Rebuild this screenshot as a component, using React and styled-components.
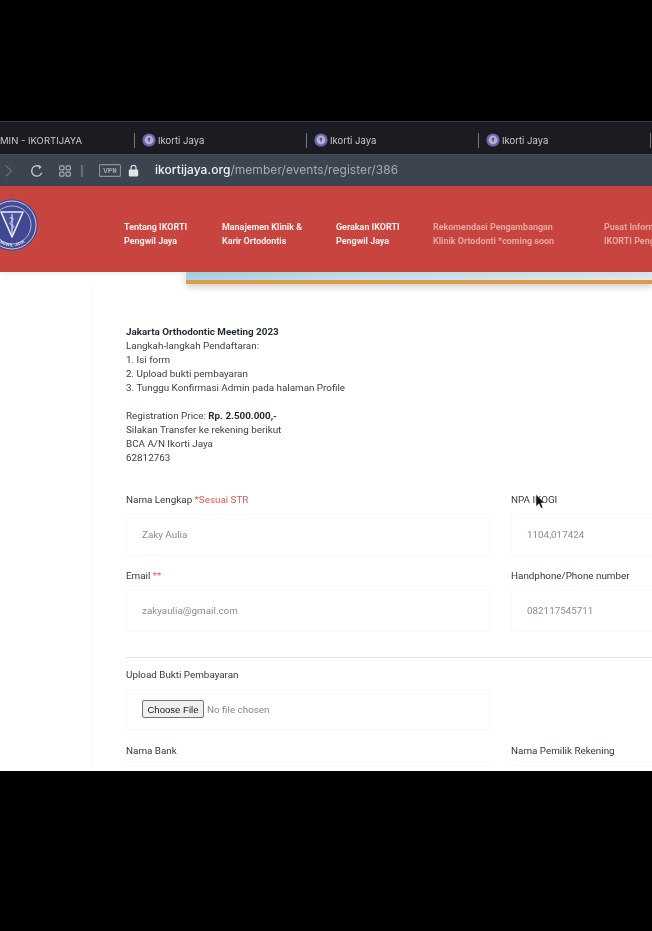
import React from "react";
import styled, { createGlobalStyle } from "styled-components";

const Global = createGlobalStyle`
  html, body { margin: 0; padding: 0; background: #000; }
  * { box-sizing: border-box; }
`;

const Page = styled.div`
  width: 652px;
  height: 931px;
  background: #000;
  overflow: hidden;
  display: flex;
  flex-direction: column;
  padding-top: 121px;
  font-family: Roboto, "Liberation Sans", sans-serif;
`;

const Screen = styled.div`
  position: relative;
  width: 652px;
  height: 650px;
  overflow: hidden;
  background: #fff;
  display: flex;
  flex-direction: column;
  filter: blur(0.5px);
`;

const TabBar = styled.div`
  height: 33px;
  flex: none;
  display: flex;
  align-items: center;
  padding-top: 4px;
  background: #1b1c21;
  border-top: 1px solid #35373d;
`;

const Tab = styled.div`
  flex: none;
  width: ${(p) => p.$width}px;
  height: 15px;
  display: flex;
  align-items: center;
  gap: 2px;
  padding-left: ${(p) => p.$inset}px;
  border-right: 1px solid #75777c;
  color: #c8c9cc;
  font-family: Inter, sans-serif;
  font-size: 9.5px;
  white-space: nowrap;
`;

const Toolbar = styled.div`
  height: 32px;
  flex: none;
  display: flex;
  align-items: center;
  background: #3c4450;
  border-top: 1px solid #474e5a;
  color: #9aa0a8;
`;

const ToolIcon = styled.svg`
  flex: none;
  display: block;
  margin-left: ${(p) => p.$left}px;
`;

const Url = styled.div`
  margin-left: 16px;
  margin-top: -2px;
  font-family: Inter, sans-serif;
  font-size: 12px;
  letter-spacing: 0.05px;
  color: #a6abb2;
  white-space: nowrap;
  b { font-weight: 500; color: #f0f1f2; }
`;

const Header = styled.header`
  position: relative;
  z-index: 2;
  height: 86px;
  flex: none;
  display: flex;
  align-items: center;
  background: #c8453f;
  box-shadow: 0 3px 6px rgba(0, 0, 0, 0.06);
`;

const Logo = styled.div`
  flex: none;
  display: block;
  width: 52px;
  height: 52px;
  margin: 0 86px 8px -14px;
`;

const Nav = styled.nav`
  display: grid;
  grid-template-columns: 98px 114px 97px 171px 120px;
  flex: none;
  margin-top: 9px;
`;

const NavItem = styled.div`
  font-size: 8.95px;
  font-weight: 700;
  line-height: 14px;
  white-space: nowrap;
  color: ${(p) => (p.$muted ? "#e6a7a2" : "#fbeeed")};
`;

const Ribbon = styled.div`
  flex: none;
  height: 12px;
  margin-left: 186px;
  background: linear-gradient(90deg, #a9d6e6 0%, #c6e2ec 40%, #dcebf1 100%);
  border-bottom: 4px solid #e09a48;
  box-shadow: 0 3px 7px rgba(0, 0, 0, 0.2);
`;

const Main = styled.main`
  flex: 1;
  margin-left: 91px;
  padding: 41px 0 0 34px;
  border-left: 1px solid #f9f9fa;
  width: 800px;
  color: #3b4148;
  font-size: 9.85px;
`;

const Intro = styled.div`
  line-height: 14px;
  margin-bottom: 28px;
  strong { font-weight: 700; color: #1f2a35; }
`;

const Line = styled.div`
  min-height: 14px;
  white-space: nowrap;
`;

const Grid = styled.div`
  display: grid;
  grid-template-columns: 364px 364px;
  column-gap: 21px;
`;

const Field = styled.div`
  display: flex;
  flex-direction: column;
  margin-bottom: ${(p) => p.$gap ?? 14}px;
`;

const Label = styled.label`
  height: 14px;
  margin-bottom: 7px;
  line-height: 14px;
  color: #33383d;
  white-space: nowrap;
  span { color: #e4575a; }
`;

const Box = styled.div`
  height: 41px;
  width: ${(p) => (p.$narrow ? "364px" : "auto")};
  padding: 0 0 1px 15px;
  display: flex;
  align-items: center;
  border: 1px solid #f9f9fc;
  border-radius: 2px;
  color: #8b8d90;
  background: #fff;
  box-shadow: 0 1px 3px rgba(40, 50, 110, 0.02);
`;

const Rule = styled.hr`
  width: 760px;
  margin: 26px 0 10px;
  border: 0;
  border-top: 1px solid #e4e6e8;
`;

const FileButton = styled.div`
  width: 62px;
  height: 18px;
  flex: none;
  display: flex;
  align-items: center;
  justify-content: center;
  background: #efefef;
  border: 1px solid #767676;
  border-radius: 2px;
  color: #1c1c1c;
  font-family: "Liberation Sans", sans-serif;
  font-size: 9.6px;
`;

const FileHint = styled.span`
  margin-left: 3px;
  color: #85878a;
`;

const Cursor = styled.svg`
  position: absolute;
  left: 535px;
  top: 373px;
  z-index: 3;
`;

const Favicon = () => (
  <svg width="14" height="14" viewBox="0 0 14 14" style={{ flex: "none" }}>
    <circle cx="7" cy="7" r="6.6" fill="#6a65a8" />
    <circle cx="7" cy="7" r="4.4" fill="#b4b2d6" />
    <path d="M5.3 4.8h3.4L7 9.6z" fill="#56518f" />
  </svg>
);

const LogoMark = () => (
  <svg viewBox="0 0 52 52" width="52" height="52" style={{ display: "block" }}>
    <circle cx="26" cy="26" r="25.8" fill="#434c94" />
    <circle cx="26" cy="26" r="24" fill="none" stroke="#d9dbec" strokeWidth="0.9" />
    <circle cx="26" cy="26" r="19" fill="#3f4890" stroke="#d2d5e8" strokeWidth="0.8" />
    <path d="M15 13h22L26 38z" fill="#4a539e" stroke="#e9eaf4" strokeWidth="1.6" strokeLinejoin="round" />
    <path d="M26 15v20" stroke="#e9eaf4" strokeWidth="1.1" />
    <path d="M23.5 19c4-1 5 1.5 2.5 3s-3 3 0 4 2 3 0 3.5" fill="none" stroke="#e9eaf4" strokeWidth="0.8" />
    <defs>
      <path id="logoArc" d="M4.5 26a21.5 21.5 0 0 0 43 0" />
    </defs>
    <text fill="#dfe1f0" fontFamily="Roboto, sans-serif" fontSize="4.4" fontWeight="700" letterSpacing="0.2">
      <textPath href="#logoArc" startOffset="22%">PENGWIL JAYA</textPath>
    </text>
  </svg>
);

const App = () => (
  <Page>
    <Global />
    <Screen>
      <TabBar>
        <Tab $width={135} $inset={0}>MIN - IKORTIJAYA</Tab>
        {[0, 1, 2].map((i) => (
          <Tab key={i} $width={172} $inset={7}>
            <Favicon />
            Ikorti Jaya
          </Tab>
        ))}
      </TabBar>
      <Toolbar>
        <ToolIcon $left={4} width="9" height="14" viewBox="0 0 9 14" fill="none" stroke="#6a717c" strokeWidth="1.2">
          <path d="M1.5 1.5 7.5 7l-6 5.5" />
        </ToolIcon>
        <ToolIcon $left={17} width="14" height="14" viewBox="0 0 14 14" fill="none" stroke="#c3c6cb" strokeWidth="1.3">
          <path d="M11.8 8.8A5.2 5.2 0 1 1 9.6 2.5" />
          <path d="M8.4 0.8 11.6 2.8 9.2 5.4" fill="#c3c6cb" stroke="none" />
        </ToolIcon>
        <ToolIcon $left={15} width="12" height="12" viewBox="0 0 12 12" fill="none" stroke="#a9adb3" strokeWidth="1.1">
          <rect x="0.6" y="0.9" width="4.4" height="4" rx="1" />
          <rect x="7" y="0.9" width="4.4" height="4" rx="1" />
          <rect x="0.6" y="7.1" width="4.4" height="4" rx="1" />
          <rect x="7" y="7.1" width="4.4" height="4" rx="1" />
        </ToolIcon>
        <ToolIcon $left={10} width="2" height="12" viewBox="0 0 2 12">
          <rect x="0.4" width="1.1" height="12" fill="#8b9098" />
        </ToolIcon>
        <ToolIcon $left={16} width="22" height="13" viewBox="0 0 22 13" fill="none">
          <rect x="0.6" y="0.6" width="20.8" height="11.8" rx="1" stroke="#8d929a" strokeWidth="1.1" />
          <text x="11" y="9" textAnchor="middle" fill="#a4a8ae" fontFamily="Liberation Mono, monospace" fontSize="7.5" fontWeight="700">VPN</text>
        </ToolIcon>
        <ToolIcon $left={7} width="11" height="13" viewBox="0 0 11 13" fill="none">
          <path d="M3 6V3.8a2.5 2.5 0 0 1 5 0V6" stroke="#dfe1e4" strokeWidth="1.2" />
          <rect x="0.8" y="5.5" width="9.4" height="7" rx="1.2" fill="#e2e4e6" />
        </ToolIcon>
        <Url><b>ikortijaya.org</b>/member/events/register/386</Url>
      </Toolbar>
      <Header>
        <Logo><LogoMark /></Logo>
        <Nav>
          <NavItem><div>Tentang IKORTI</div><div>Pengwil Jaya</div></NavItem>
          <NavItem><div>Manajemen Klinik &amp;</div><div>Karir Ortodontis</div></NavItem>
          <NavItem><div>Gerakan IKORTI</div><div>Pengwil Jaya</div></NavItem>
          <NavItem $muted><div>Rekomendasi Pengambangan</div><div>Klinik Ortodonti *coming soon</div></NavItem>
          <NavItem $muted><div>Pusat Informasi</div><div>IKORTI Pengwil Jaya</div></NavItem>
        </Nav>
      </Header>
      <Ribbon />
      <Main>
        <Intro>
          <Line><strong>Jakarta Orthodontic Meeting 2023</strong></Line>
          <Line>Langkah-langkah Pendaftaran:</Line>
          <Line>1. Isi form</Line>
          <Line>2. Upload bukti pembayaran</Line>
          <Line>3. Tunggu Konfirmasi Admin pada halaman Profile</Line>
          <Line />
          <Line>Registration Price: <strong>Rp. 2.500.000,-</strong></Line>
          <Line>Silakan Transfer ke rekening berikut</Line>
          <Line>BCA A/N Ikorti Jaya</Line>
          <Line>62812763</Line>
        </Intro>
        <Grid>
          <Field>
            <Label>Nama Lengkap <span>*Sesuai STR</span></Label>
            <Box>Zaky Aulia</Box>
          </Field>
          <Field>
            <Label>NPA IKOGI</Label>
            <Box>1104,017424</Box>
          </Field>
          <Field $gap={0}>
            <Label>Email <span>**</span></Label>
            <Box>zakyaulia@gmail.com</Box>
          </Field>
          <Field $gap={0}>
            <Label>Handphone/Phone number</Label>
            <Box>082117545711</Box>
          </Field>
        </Grid>
        <Rule />
        <Field>
          <Label>Upload Bukti Pembayaran</Label>
          <Box $narrow>
            <FileButton>Choose File</FileButton>
            <FileHint>No file chosen</FileHint>
          </Box>
        </Field>
        <Grid>
          <Field>
            <Label>Nama Bank</Label>
            <Box />
          </Field>
          <Field>
            <Label>Nama Pemilik Rekening</Label>
            <Box />
          </Field>
        </Grid>
      </Main>
      <Cursor width="10" height="15" viewBox="0 0 10 15">
        <path d="M1 0.5v12l3-2.8 2 4.6 2-.9-2-4.4h3.8z" fill="#111" stroke="#fff" strokeWidth="0.5" />
      </Cursor>
    </Screen>
  </Page>
);

export default App;
